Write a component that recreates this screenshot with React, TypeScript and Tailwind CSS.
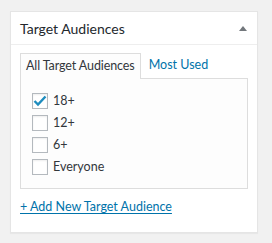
export default function App() {
  const items = [
    { label: '18+', checked: true },
    { label: '12+', checked: false },
    { label: '6+', checked: false },
    { label: 'Everyone', checked: false },
  ];

  return (
    <div className="w-[272px] h-[243px] bg-[#f1f1f1] pt-[11px] pl-[10px] font-['Lato','Liberation_Sans',sans-serif] text-[#32373c]">
      <div className="w-[248px] h-[222px] bg-white border border-[#e5e5e5] shadow-[0_1px_1px_rgba(0,0,0,0.04)]">
        {/* Header */}
        <div className="h-[33px] border-b border-[#eee] flex items-center justify-between pl-[9px] pr-[10px]">
          <h2 className="text-[14px] text-[#23282d]">Target Audiences</h2>
          <svg width="8" height="5" viewBox="0 0 8 5" className="mt-[1px]">
            <path d="M0 5 L4 0 L8 5 Z" fill="#72777c" />
          </svg>
        </div>

        {/* Inside */}
        <div className="px-[9px] pt-[8px]">
          <div className="flex text-[12.5px]">
            <div className="h-[26px] px-[5px] tracking-[-0.1px] flex items-center border border-b-0 border-[#ddd] bg-[#fdfdfd] relative -mb-px z-10">
              All Target Audiences
            </div>
            <div className="h-[25px] pl-[8px] flex items-center text-[#0073aa]">Most Used</div>
          </div>
          <div className="h-[111px] border border-[#ddd] bg-[#fdfdfd] pt-[14px] pl-[11px] flex flex-col gap-[6px]">
            {items.map((it) => (
              <label key={it.label} className="flex items-center gap-[5px] text-[12.5px] leading-[16px]">
                <span className="w-[16px] h-[16px] border border-[#b4b9be] bg-white shadow-[inset_0_1px_2px_rgba(0,0,0,0.07)] flex items-center justify-center">
                  {it.checked && (
                    <svg width="14" height="12" viewBox="0 0 14 12">
                      <path d="M1.5 6 L5 9.5 L12.5 1.5" stroke="#1e8cbe" strokeWidth="2.4" fill="none" />
                    </svg>
                  )}
                </span>
                <span>{it.label}</span>
              </label>
            ))}
          </div>
          <div className="pt-[7px] leading-[18px]">
            <a href="#" className="text-[12.5px] text-[#0073aa] underline underline-offset-2">
              + Add New Target Audience
            </a>
          </div>
        </div>
      </div>
    </div>
  );
}
